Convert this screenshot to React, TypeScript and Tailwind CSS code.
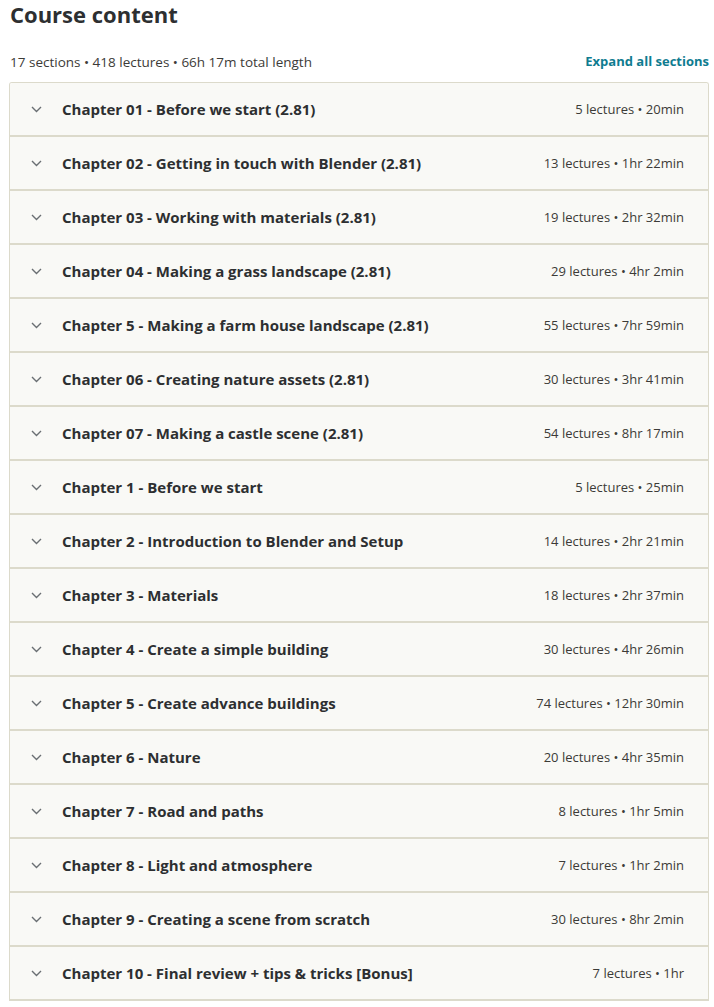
import React from 'react';

interface Section {
  title: string;
  meta: string;
}

const sections: Section[] = [
  { title: 'Chapter 01 - Before we start (2.81)', meta: '5 lectures • 20min' },
  { title: 'Chapter 02 - Getting in touch with Blender (2.81)', meta: '13 lectures • 1hr 22min' },
  { title: 'Chapter 03 - Working with materials (2.81)', meta: '19 lectures • 2hr 32min' },
  { title: 'Chapter 04 - Making a grass landscape (2.81)', meta: '29 lectures • 4hr 2min' },
  { title: 'Chapter 5 - Making a farm house landscape (2.81)', meta: '55 lectures • 7hr 59min' },
  { title: 'Chapter 06 - Creating nature assets (2.81)', meta: '30 lectures • 3hr 41min' },
  { title: 'Chapter 07 - Making a castle scene (2.81)', meta: '54 lectures • 8hr 17min' },
  { title: 'Chapter 1 - Before we start', meta: '5 lectures • 25min' },
  { title: 'Chapter 2 - Introduction to Blender and Setup', meta: '14 lectures • 2hr 21min' },
  { title: 'Chapter 3 - Materials', meta: '18 lectures • 2hr 37min' },
  { title: 'Chapter 4 - Create a simple building', meta: '30 lectures • 4hr 26min' },
  { title: 'Chapter 5 - Create advance buildings', meta: '74 lectures • 12hr 30min' },
  { title: 'Chapter 6 - Nature', meta: '20 lectures • 4hr 35min' },
  { title: 'Chapter 7 - Road and paths', meta: '8 lectures • 1hr 5min' },
  { title: 'Chapter 8 - Light and atmosphere', meta: '7 lectures • 1hr 2min' },
  { title: 'Chapter 9 - Creating a scene from scratch', meta: '30 lectures • 8hr 2min' },
  { title: 'Chapter 10 - Final review + tips & tricks [Bonus]', meta: '7 lectures • 1hr' },
];

function Chevron() {
  return (
    <svg width="11" height="7" viewBox="0 0 11 7" fill="none" className="shrink-0">
      <path d="M1 1l4.5 4.5L10 1" stroke="#6a6f73" strokeWidth="1.4" />
    </svg>
  );
}

function SectionRow({ title, meta }: Section) {
  return (
    <div className="flex h-[54px] items-center border-b-2 border-[#dcdacb] bg-[#f9f9f6] pl-[21px] pr-[24px]">
      <Chevron />
      <span className="ml-[20px] text-[15px] font-bold text-[#2d2f31]">{title}</span>
      <span className="ml-auto pt-[2px] text-[13px] text-[#3c3b37]">{meta}</span>
    </div>
  );
}

export default function App() {
  return (
    <div className="min-h-screen bg-white pr-[5px] font-['Open_Sans',sans-serif] text-[#2d2f31]">
      <h2 className="pl-[10px] text-[22px] leading-[28px] font-bold">Course content</h2>
      <div className="mt-[24px] flex h-[20px] items-center justify-between pl-[10px]">
        <span className="text-[13.5px] text-[#3c3b37]">17 sections • 418 lectures • 66h 17m total length</span>
        <button className="text-[13px] font-bold text-[#0f7c90]">Expand all sections</button>
      </div>
      <div className="ml-[9px] mt-[10px] overflow-hidden rounded-t-[3px] border border-b-0 border-[#dcdacb]">
        {sections.map((s) => (
          <SectionRow key={s.title} {...s} />
        ))}
      </div>
    </div>
  );
}
